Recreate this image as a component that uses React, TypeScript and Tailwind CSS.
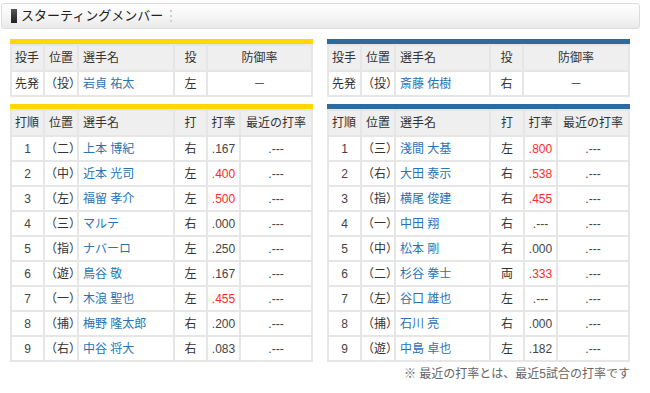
import React from "react";

type TBatter = {
  order: number;
  pos: string;
  name: string;
  bat: string;
  avg: string;
  hot?: boolean;
};

const leftLineup: TBatter[] = [
  { order: 1, pos: "（二）", name: "上本 博紀", bat: "右", avg: ".167" },
  { order: 2, pos: "（中）", name: "近本 光司", bat: "左", avg: ".400", hot: true },
  { order: 3, pos: "（左）", name: "福留 孝介", bat: "左", avg: ".500", hot: true },
  { order: 4, pos: "（三）", name: "マルテ", bat: "右", avg: ".000" },
  { order: 5, pos: "（指）", name: "ナバーロ", bat: "左", avg: ".250" },
  { order: 6, pos: "（遊）", name: "鳥谷 敬", bat: "左", avg: ".167" },
  { order: 7, pos: "（一）", name: "木浪 聖也", bat: "左", avg: ".455", hot: true },
  { order: 8, pos: "（捕）", name: "梅野 隆太郎", bat: "右", avg: ".200" },
  { order: 9, pos: "（右）", name: "中谷 将大", bat: "右", avg: ".083" },
];

const rightLineup: TBatter[] = [
  { order: 1, pos: "（三）", name: "淺間 大基", bat: "左", avg: ".800", hot: true },
  { order: 2, pos: "（右）", name: "大田 泰示", bat: "右", avg: ".538", hot: true },
  { order: 3, pos: "（指）", name: "横尾 俊建", bat: "右", avg: ".455", hot: true },
  { order: 4, pos: "（一）", name: "中田 翔", bat: "右", avg: ".---" },
  { order: 5, pos: "（中）", name: "松本 剛", bat: "右", avg: ".000" },
  { order: 6, pos: "（二）", name: "杉谷 拳士", bat: "両", avg: ".333", hot: true },
  { order: 7, pos: "（左）", name: "谷口 雄也", bat: "左", avg: ".---" },
  { order: 8, pos: "（捕）", name: "石川 亮", bat: "右", avg: ".000" },
  { order: 9, pos: "（遊）", name: "中島 卓也", bat: "左", avg: ".182" },
];

const th = "border-2 border-[#e6e6e6] bg-[#efefef] font-normal";
const td = "border-2 border-[#e6e6e6] bg-white";

const PitcherTable = ({ bar, name, hand, nameW }: { bar: string; name: string; hand: string; nameW: string }) => (
  <div>
    <div className={`h-[5px] ${bar}`} />
    <table className="w-full table-fixed border-collapse text-[12px] text-[#333]">
      <colgroup>
        <col className="w-[33px]" />
        <col className="w-[34px]" />
        <col className={nameW} />
        <col className="w-[33px]" />
        <col />
      </colgroup>
      <thead>
        <tr className="h-[26px]">
          <th className={`${th} text-left pl-[3px]`}>投手</th>
          <th className={`${th} text-left pl-[4px]`}>位置</th>
          <th className={`${th} text-left pl-[4px]`}>選手名</th>
          <th className={`${th} text-center`}>投</th>
          <th className={`${th} text-center`}>防御率</th>
        </tr>
      </thead>
      <tbody>
        <tr className="h-[25px]">
          <td className={`${td} pl-[3px]`}>先発</td>
          <td className={`${td} text-center`}>（投）</td>
          <td className={`${td} pl-[4px] text-[#2a72b5]`}>{name}</td>
          <td className={`${td} text-center`}>{hand}</td>
          <td className={`${td} text-center`}>－</td>
        </tr>
      </tbody>
    </table>
  </div>
);

const LineupTable = ({ bar, rows, nameW, batW }: { bar: string; rows: TBatter[]; nameW: string; batW: string }) => (
  <div>
    <div className={`h-[5px] ${bar}`} />
    <table className="w-full table-fixed border-collapse text-[12px] text-[#333]">
      <colgroup>
        <col className="w-[33px]" />
        <col className="w-[34px]" />
        <col className={nameW} />
        <col className={batW} />
        <col className="w-[33px]" />
        <col />
      </colgroup>
      <thead>
        <tr className="h-[26px]">
          <th className={`${th} text-left pl-[3px]`}>打順</th>
          <th className={`${th} text-left pl-[4px]`}>位置</th>
          <th className={`${th} text-left pl-[4px]`}>選手名</th>
          <th className={`${th} text-center`}>打</th>
          <th className={`${th} text-center`}>打率</th>
          <th className={`${th} text-center`}>最近の打率</th>
        </tr>
      </thead>
      <tbody>
        {rows.map((r) => (
          <tr key={r.order} className="h-[25px]">
            <td className={`${td} text-center text-[#444]`}>{r.order}</td>
            <td className={`${td} text-center`}>{r.pos}</td>
            <td className={`${td} pl-[4px] text-[#2a72b5]`}>{r.name}</td>
            <td className={`${td} text-center`}>{r.bat}</td>
            <td className={`${td} text-center ${r.hot ? "text-[#ff2a2a]" : "text-[#444]"}`}>{r.avg}</td>
            <td className={`${td} text-center text-[#444]`}>.---</td>
          </tr>
        ))}
      </tbody>
    </table>
  </div>
);

const App = () => {
  return (
    <div
      className="w-[650px] h-[393px] bg-white overflow-hidden"
      style={{ fontFamily: '"Liberation Sans", "Noto Sans CJK JP", sans-serif' }}
    >
      {/* Section header */}
      <div className="ml-[1px] mt-[3px] w-[639px] h-[26px] flex items-center rounded-[3px] border border-[#dcdcdc] bg-gradient-to-b from-white via-[#f6f6f6] to-[#e9e9e9]">
        <div className="ml-[9px] w-[6px] h-[14px] bg-gradient-to-b from-[#555] to-[#222]" />
        <span className="ml-[4px] text-[13px] text-[#222]">スターティングメンバー</span>
        <div className="ml-[7px] flex flex-col gap-[3px]">
          <span className="w-[2px] h-[2px] bg-[#cfcfcf]" />
          <span className="w-[2px] h-[2px] bg-[#cfcfcf]" />
          <span className="w-[2px] h-[2px] bg-[#cfcfcf]" />
        </div>
      </div>

      <div className="mt-[10px] ml-[10px] flex gap-[14px]">
        {/* Home side */}
        <div className="w-[303px] flex flex-col gap-[7px]">
          <PitcherTable bar="bg-[#ffd800]" name="岩貞 祐太" hand="左" nameW="w-[96px]" />
          <LineupTable bar="bg-[#ffd800]" rows={leftLineup} nameW="w-[96px]" batW="w-[33px]" />
        </div>
        {/* Visitor side */}
        <div className="w-[303px] flex flex-col gap-[7px]">
          <PitcherTable bar="bg-[#2e6a9e]" name="斎藤 佑樹" hand="右" nameW="w-[95px]" />
          <LineupTable bar="bg-[#2e6a9e]" rows={rightLineup} nameW="w-[95px]" batW="w-[34px]" />
          <p className="-mt-[4px] text-right text-[12px] text-[#666]">※ 最近の打率とは、最近5試合の打率です</p>
        </div>
      </div>
    </div>
  );
};

export default App;
